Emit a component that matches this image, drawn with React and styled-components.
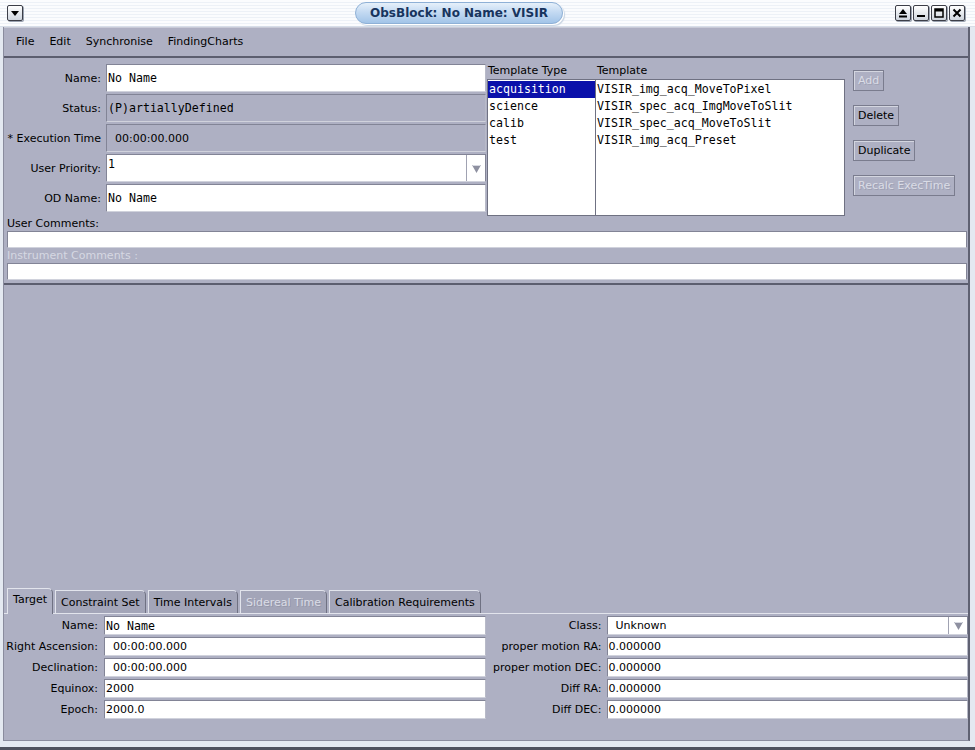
import React from 'react';
import styled, { createGlobalStyle } from 'styled-components';

const sans = '"DejaVu Sans", "Liberation Sans", sans-serif';
const mono = '"DejaVu Sans Mono", "Liberation Mono", monospace';

const GlobalStyle = createGlobalStyle`
  html, body { margin: 0; padding: 0; background: #e2e7ef; }
  body { font-family: ${sans}; font-size: 11px; color: #000; }
  * { box-sizing: border-box; }
`;

const Window = styled.div`
  width: 975px;
  height: 750px;
  display: flex;
  flex-direction: column;
  overflow: hidden;
  background: #e4e9f1;
`;

const TitleBar = styled.div`
  height: 27px;
  flex: none;
  display: flex;
  align-items: center;
  padding: 0 10px 0 7px;
  background: repeating-linear-gradient(to bottom, #fbfcfe 0 2px, #edf1f7 2px 3px);
  border-bottom: 1px solid #d6dde8;
`;

const TitleCenter = styled.div`
  flex: 1;
  display: flex;
  justify-content: center;
`;

const TitlePill = styled.div`
  height: 22px;
  padding: 0 14px;
  border-radius: 11px;
  display: flex;
  align-items: center;
  font-family: ${sans};
  font-weight: bold;
  font-size: 12px;
  color: #17345e;
  background: linear-gradient(to bottom, #e6f0fa 0%, #c4daf2 45%, #a2c4e8 100%);
  border: 1px solid #8eb0d6;
  box-shadow: 1px 1px 0 #ffffff, 2px 2px 1px #c8d4e2;
`;

const TitleButtons = styled.div`
  display: flex;
  gap: 2px;
`;

const TitleButton = styled.div`
  width: 16px;
  height: 16px;
  display: flex;
  align-items: center;
  justify-content: center;
  border: 1px solid #3c3e48;
  border-radius: 2px;
  background: linear-gradient(to bottom, #ffffff, #cfd5de);
  box-shadow: 1px 1px 0 #9aa2b0;
`;

const Frame = styled.div`
  flex: 1;
  display: flex;
  flex-direction: column;
  padding: 0 5px 6px 3px;
  border-bottom: 3px solid #4f525f;
`;

const Content = styled.div`
  flex: 1;
  display: flex;
  flex-direction: column;
  background: #aeb0c3;
  border-left: 1px solid #8a8c9e;
  border-right: 2px solid #5f6172;
  border-bottom: 1px solid #8a8c9e;
`;

const MenuBar = styled.div`
  height: 31px;
  flex: none;
  display: flex;
  align-items: center;
  gap: 15px;
  padding: 0 0 2px 12px;
  border-top: 1px solid #c9cbd8;
  border-bottom: 2px solid #5c5e6f;
`;

const MenuItem = styled.span`
  font-size: 11px;
`;

const TopPanel = styled.div`
  display: flex;
  padding-top: 6px;
  flex: none;
`;

const FormGrid = styled.div`
  width: 482px;
  display: grid;
  grid-template-columns: ${p => p.$label}px 1fr;
  grid-auto-rows: ${p => p.$row}px;
  column-gap: ${p => p.$gap}px;
  row-gap: ${p => p.$rowGap}px;
  align-content: start;
`;

const Label = styled.div`
  display: flex;
  align-items: center;
  justify-content: flex-end;
  white-space: nowrap;
  font-size: 11px;
`;

const Field = styled.div`
  height: 100%;
  display: flex;
  align-items: center;
  padding: 0 1px;
  background: ${p => (p.$readOnly ? 'transparent' : '#ffffff')};
  border: 1px solid #828496;
  border-right-color: #b8bac8;
  border-bottom-color: #d0d2dc;
  white-space: pre;
  overflow: hidden;
  font-family: ${p => (p.$mono ? mono : sans)};
  font-size: ${p => (p.$mono ? '11.6px' : '11px')};
`;

const Combo = styled.div`
  display: flex;
  height: 100%;
  background: #ffffff;
  border: 1px solid #828496;
  border-bottom-color: #d0d2dc;
`;

const ComboText = styled.div`
  flex: 1;
  display: flex;
  align-items: ${p => (p.$top ? 'flex-start' : 'center')};
  padding: ${p => (p.$top ? '2px 1px 0' : '0 1px')};
  white-space: pre;
  font-family: ${p => (p.$mono ? mono : sans)};
  font-size: ${p => (p.$mono ? '11.6px' : '11px')};
`;

const ComboArrow = styled.div`
  width: 19px;
  display: flex;
  align-items: center;
  justify-content: center;
  border-left: 1px solid #a0a2b2;
`;

const TemplateArea = styled.div`
  display: grid;
  grid-template-columns: 109px 249px;
  grid-template-rows: 15px 137px;
  margin-left: 1px;
`;

const ColumnHead = styled.div`
  font-size: 11px;
  padding-left: 1px;
  line-height: 13px;
`;

const List = styled.div`
  background: #ffffff;
  border: 1px solid #6f7182;
  border-left-width: ${p => (p.$joined ? 0 : 1)}px;
  padding-top: 1px;
`;

const ListItem = styled.div`
  height: 17px;
  line-height: 16px;
  padding-left: 1px;
  font-family: ${mono};
  font-size: 11.6px;
  white-space: nowrap;
  color: ${p => (p.$selected ? '#ffffff' : '#000000')};
  background: ${p => (p.$selected ? '#0a10aa' : 'transparent')};
`;

const ButtonColumn = styled.div`
  display: flex;
  flex-direction: column;
  align-items: flex-start;
  gap: 14px;
  margin-left: 8px;
  padding-top: 6px;
`;

const Button = styled.div`
  height: 21px;
  display: flex;
  align-items: center;
  padding: 0 4px;
  font-size: 11px;
  border: 1px solid #7a7c8e;
  box-shadow: inset 1px 1px 0 #d4d6e0;
  color: ${p => (p.$disabled ? '#dadce6' : '#000000')};
  text-shadow: ${p => (p.$disabled ? '1px 1px 0 #9fa1b3' : 'none')};
`;

const Comments = styled.div`
  display: flex;
  flex-direction: column;
  padding: 1px 1px 3px 3px;
  flex: none;
`;

const CommentLabel = styled.div`
  height: 14px;
  line-height: 13px;
  font-size: 11px;
  color: ${p => (p.$disabled ? '#d6d8e2' : '#000000')};
`;

const CommentField = styled.div`
  height: 17px;
  background: #ffffff;
  border: 1px solid #828496;
  border-bottom-color: #d0d2dc;
  margin-bottom: ${p => p.$gap || 0}px;
`;

const Divider = styled.div`
  border-top: 2px solid #5c5e6f;
`;

const Workspace = styled.div`
  flex: 1;
`;

const TabRow = styled.div`
  display: flex;
  align-items: flex-end;
  gap: 2px;
  padding-left: 3px;
  height: 26px;
  flex: none;
`;

const Tab = styled.div`
  height: ${p => (p.$active ? 26 : 23)}px;
  display: flex;
  align-items: ${p => (p.$active ? 'flex-start' : 'center')};
  padding: ${p => (p.$active ? '4px 5px 0 5px' : '0 5px')};
  font-size: 11px;
  white-space: nowrap;
  background: ${p => (p.$active ? '#aeb0c3' : '#a3a5b8')};
  border-top: 1px solid #e2e4ec;
  border-left: 1px solid #e2e4ec;
  border-right: 1px solid #6f7182;
  border-top-right-radius: 5px;
  color: ${p => (p.$disabled ? '#dadce6' : '#000000')};
  text-shadow: ${p => (p.$disabled ? '1px 1px 0 #9597a9' : 'none')};
  position: relative;
  margin-bottom: ${p => (p.$active ? '-1px' : '0')};
  z-index: ${p => (p.$active ? 1 : 0)};
`;

const TabBody = styled.div`
  height: 127px;
  flex: none;
  display: flex;
  padding-top: 2px;
  border-top: 1px solid #e2e4ec;
`;

const RightForm = styled(FormGrid)`
  width: 481px;
  margin-left: 2px;
`;

const DownArrow = () => (
  <svg width="11" height="11" viewBox="0 0 11 11">
    <polygon points="1,2 10,2 5.5,10" fill="#8e90a0" />
    <polygon points="1,2 10,2 9,3 2,3" fill="#d8dae2" />
  </svg>
);

const MenuButton = () => (
  <TitleButton>
    <svg width="10" height="8" viewBox="0 0 10 8">
      <polygon points="1,2 9,2 5,7" fill="#000" />
    </svg>
  </TitleButton>
);

const templateTypes = ['acquisition', 'science', 'calib', 'test'];
const templates = [
  'VISIR_img_acq_MoveToPixel',
  'VISIR_spec_acq_ImgMoveToSlit',
  'VISIR_spec_acq_MoveToSlit',
  'VISIR_img_acq_Preset',
];
const tabs = [
  { name: 'Target', active: true },
  { name: 'Constraint Set' },
  { name: 'Time Intervals' },
  { name: 'Sidereal Time', disabled: true },
  { name: 'Calibration Requirements' },
];

export default function App() {
  return (
    <Window>
      <GlobalStyle />
      <TitleBar>
        <MenuButton />
        <TitleCenter>
          <TitlePill>ObsBlock: No Name: VISIR</TitlePill>
        </TitleCenter>
        <TitleButtons>
          <TitleButton>
            <svg width="10" height="10" viewBox="0 0 10 10">
              <polygon points="1,6 9,6 5,1" fill="#000" />
              <rect x="1" y="7.5" width="8" height="2" fill="#000" />
            </svg>
          </TitleButton>
          <TitleButton>
            <svg width="10" height="10" viewBox="0 0 10 10">
              <rect x="1" y="7" width="8" height="2" fill="#000" />
            </svg>
          </TitleButton>
          <TitleButton>
            <svg width="10" height="10" viewBox="0 0 10 10">
              <rect x="1" y="1" width="8" height="8" fill="none" stroke="#000" strokeWidth="1.5" />
              <rect x="1" y="1" width="8" height="2.5" fill="#000" />
            </svg>
          </TitleButton>
          <TitleButton>
            <svg width="10" height="10" viewBox="0 0 10 10">
              <path d="M1.5 1.5 L8.5 8.5 M8.5 1.5 L1.5 8.5" stroke="#000" strokeWidth="2" />
            </svg>
          </TitleButton>
        </TitleButtons>
      </TitleBar>

      <Frame>
        <Content>
          <MenuBar>
            <MenuItem>File</MenuItem>
            <MenuItem>Edit</MenuItem>
            <MenuItem>Synchronise</MenuItem>
            <MenuItem>FindingCharts</MenuItem>
          </MenuBar>

          <TopPanel>
            <FormGrid $label={97} $row={28} $gap={5} $rowGap={2}>
              <Label>Name:</Label>
              <Field $mono>No Name</Field>
              <Label>Status:</Label>
              <Field $mono $readOnly>(P)artiallyDefined</Field>
              <Label>* Execution Time</Label>
              <Field $readOnly>{'  00:00:00.000'}</Field>
              <Label>User Priority:</Label>
              <Combo>
                <ComboText $mono $top>1</ComboText>
                <ComboArrow><DownArrow /></ComboArrow>
              </Combo>
              <Label>OD Name:</Label>
              <Field $mono>No Name</Field>
            </FormGrid>

            <TemplateArea>
              <ColumnHead>Template Type</ColumnHead>
              <ColumnHead>Template</ColumnHead>
              <List>
                {templateTypes.map((t, i) => (
                  <ListItem key={t} $selected={i === 0}>{t}</ListItem>
                ))}
              </List>
              <List $joined>
                {templates.map(t => (
                  <ListItem key={t}>{t}</ListItem>
                ))}
              </List>
            </TemplateArea>

            <ButtonColumn>
              <Button $disabled>Add</Button>
              <Button>Delete</Button>
              <Button>Duplicate</Button>
              <Button $disabled>Recalc ExecTime</Button>
            </ButtonColumn>
          </TopPanel>

          <Comments>
            <CommentLabel>User Comments:</CommentLabel>
            <CommentField $gap={1} />
            <CommentLabel $disabled>Instrument Comments :</CommentLabel>
            <CommentField />
          </Comments>
          <Divider />

          <Workspace />

          <TabRow>
            {tabs.map(t => (
              <Tab key={t.name} $active={t.active} $disabled={t.disabled}>{t.name}</Tab>
            ))}
          </TabRow>
          <TabBody>
            <FormGrid $label={94} $row={19} $gap={6} $rowGap={2}>
              <Label>Name:</Label>
              <Field $mono>No Name</Field>
              <Label>Right Ascension:</Label>
              <Field>{'  00:00:00.000'}</Field>
              <Label>Declination:</Label>
              <Field>{'  00:00:00.000'}</Field>
              <Label>Equinox:</Label>
              <Field>2000</Field>
              <Label>Epoch:</Label>
              <Field>2000.0</Field>
            </FormGrid>
            <RightForm $label={114} $row={19} $gap={5} $rowGap={2}>
              <Label>Class:</Label>
              <Combo>
                <ComboText>{'  Unknown'}</ComboText>
                <ComboArrow><DownArrow /></ComboArrow>
              </Combo>
              <Label>proper motion RA:</Label>
              <Field>0.000000</Field>
              <Label>proper motion DEC:</Label>
              <Field>0.000000</Field>
              <Label>Diff RA:</Label>
              <Field>0.000000</Field>
              <Label>Diff DEC:</Label>
              <Field>0.000000</Field>
            </RightForm>
          </TabBody>
        </Content>
      </Frame>
    </Window>
  );
}
